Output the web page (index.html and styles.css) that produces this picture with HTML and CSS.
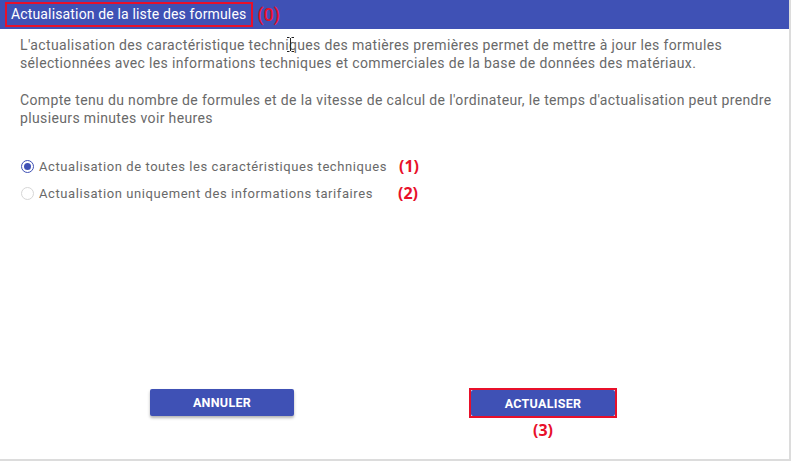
FILE: index.html
```html
<!DOCTYPE html>
<html lang="fr">
<head>
<meta charset="utf-8">
<link rel="stylesheet" href="styles.css">
</head>
<body>
<div class="dialog">
  <div class="header">
    <span class="title">Actualisation de la liste des formules</span>
    <span class="note-top">(0)</span>
  </div>
  <div class="content">
    <p class="para">L'actualisation des caractéristique techniques des matières premières permet de mettre à jour les formules sélectionnées avec les informations techniques et commerciales de la base de données des matériaux.<svg class="cursor" width="7" height="15" viewBox="0 0 7 15"><path d="M0 0.5h2.5M4.5 0.5H7M3.5 1v13M0 14.5h2.5M4.5 14.5H7" stroke="#222" stroke-width="1" fill="none"/></svg></p>
    <p class="para">Compte tenu du nombre de formules et de la vitesse de calcul de l'ordinateur, le temps d'actualisation peut prendre plusieurs minutes voir heures</p>
    <div class="options">
      <div class="option">
        <span class="radio checked"></span>
        <span class="label">Actualisation de toutes les caractéristiques techniques</span>
        <span class="note n1">(1)</span>
      </div>
      <div class="option">
        <span class="radio"></span>
        <span class="label">Actualisation uniquement des informations tarifaires</span>
        <span class="note n2">(2)</span>
      </div>
    </div>
  </div>
  <div class="actions">
    <button class="btn">ANNULER</button>
    <div class="primary-wrap">
      <div class="outline"><button class="btn flat">ACTUALISER</button></div>
      <span class="note">(3)</span>
    </div>
  </div>
</div>
</body>
</html>
```
FILE: styles.css
```css
* { box-sizing: border-box; }
body {
  margin: 0;
  background: #fff;
  font-family: Roboto, "Liberation Sans", Arial, sans-serif;
}
.dialog {
  width: 791px;
  height: 461px;
  border-right: 2px solid #dcdcdc;
  border-bottom: 2px solid #dcdcdc;
  display: flex;
  flex-direction: column;
  position: relative;
}
.header {
  height: 29px;
  background: #3f51b5;
  display: flex;
  align-items: center;
  padding-left: 5px;
}
.title {
  color: #fff;
  font-size: 14px;
  letter-spacing: 0.15px;
  border: 2px solid #e8102a;
  padding: 2px 5px 2px 4px;
  line-height: 17px;
}
.note-top {
  color: #e8102a;
  font-size: 18px;
  font-weight: 500;
  margin-left: 4px;
  line-height: 18px;
}
.content {
  padding: 7px 8px 0 20px;
  flex: 1;
}
.para {
  margin: 0 0 19px 0;
  color: #696969;
  font-size: 14px;
  letter-spacing: 0.36px;
  line-height: 18px;
  position: relative;
}
.cursor {
  position: absolute;
  left: 267px;
  top: 1px;
}
.options {
  margin-top: 30px;
  display: flex;
  flex-direction: column;
  gap: 9px;
}
.option {
  display: flex;
  align-items: center;
  height: 18px;
}
.radio {
  width: 13px;
  height: 13px;
  border-radius: 50%;
  border: 1px solid #d6d6d6;
  margin-left: 1px;
  margin-right: 5px;
  position: relative;
}
.radio.checked {
  border: 1px solid #3f51b5;
}
.radio.checked::after {
  content: "";
  position: absolute;
  left: 2px;
  top: 2px;
  width: 7px;
  height: 7px;
  border-radius: 50%;
  background: #3f51b5;
}
.label {
  color: #696969;
  font-size: 13px;
  letter-spacing: 0.58px;
}
.note {
  color: #e8102a;
  font-family: "Open Sans", "Liberation Sans", sans-serif;
  font-weight: 700;
  font-size: 16px;
}
.n1 { margin-left: 12px; }
.n2 { margin-left: 25px; }
.actions {
  display: flex;
  align-items: flex-start;
  padding-left: 150px;
  gap: 175px;
  height: 70px;
}
.btn {
  width: 144px;
  height: 27px;
  border: none;
  border-radius: 2px;
  background: #3f51b5;
  color: #fff;
  font-family: Roboto, "Liberation Sans", sans-serif;
  font-weight: 700;
  font-size: 12.5px;
  letter-spacing: 0.3px;
  box-shadow: 0 2px 3px rgba(0,0,0,0.3);
  padding: 0;
}
.btn.flat { box-shadow: none; height: 26px; }
.primary-wrap {
  display: flex;
  flex-direction: column;
  align-items: center;
  margin-top: -1px;
}
.outline {
  border: 2px solid #e8102a;
  padding: 0;
}
.primary-wrap .note {
  margin-top: 3px;
  line-height: 18px;
}
```
